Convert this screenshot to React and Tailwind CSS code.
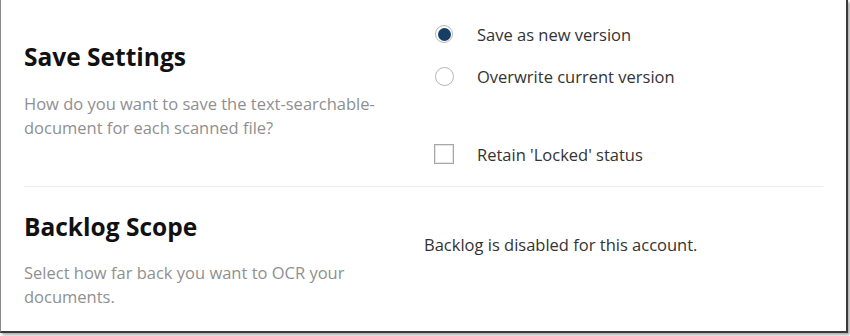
export default function App() {
  return (
    <div className="w-[850px] h-[336px] bg-white relative overflow-hidden" style={{ fontFamily: '"Open Sans", "Noto Sans", sans-serif' }}>
      <div className="w-[848px] h-[333px] bg-white border-l border-l-[#8a8a8a] border-r-2 border-r-[#3a3a3a] border-b-2 border-b-[#3a3a3a] shadow-[2px_2px_3px_rgba(0,0,0,0.35)]">
        <div className="ml-[23px] w-[799px]">
          {/* Save Settings */}
          <div className="flex h-[187px] border-b border-b-[#ececec]">
            <div className="w-[400px] pt-[43px]">
              <h2 className="text-[24.5px] leading-[28px] font-bold text-[#111]">Save Settings</h2>
              <p className="mt-[21px] text-[16.5px] leading-[24px] text-[#8f8f8f] w-[380px]">
                How do you want to save the text-searchable-document for each scanned file?
              </p>
            </div>
            <div className="flex-1 pt-[23px] text-[16.5px] leading-[24px] text-[#333]">
              <div className="flex items-center h-[24px]">
                <span className="ml-[11px] -mt-[2px] w-[18px] h-[18px] rounded-full border border-[#b5b5b5] flex items-center justify-center">
                  <span className="w-[13px] h-[13px] rounded-full bg-[#173f66]"></span>
                </span>
                <span className="ml-[24px]">Save as new version</span>
              </div>
              <div className="flex items-center h-[24px] mt-[18px]">
                <span className="ml-[11px] -mt-[2px] w-[19px] h-[19px] rounded-full border border-[#b5b5b5]"></span>
                <span className="ml-[23px]">Overwrite current version</span>
              </div>
              <div className="flex items-center h-[24px] mt-[54px]">
                <span className="ml-[10px] -mt-[3px] w-[20px] h-[20px] border border-[#a8a8a8] shadow-[inset_0_0_0_1px_#e4e4e4]"></span>
                <span className="ml-[23px]">Retain 'Locked' status</span>
              </div>
            </div>
          </div>
          {/* Backlog Scope */}
          <div className="flex">
            <div className="w-[400px] pt-[26px]">
              <h2 className="text-[24.5px] leading-[28px] font-bold text-[#111]">Backlog Scope</h2>
              <p className="mt-[20px] text-[16.5px] leading-[24px] text-[#8f8f8f] w-[360px]">
                Select how far back you want to OCR your documents.
              </p>
            </div>
            <div className="flex-1 pt-[46px] text-[16.5px] leading-[24px] text-[#333]">
              Backlog is disabled for this account.
            </div>
          </div>
        </div>
      </div>
    </div>
  );
}
